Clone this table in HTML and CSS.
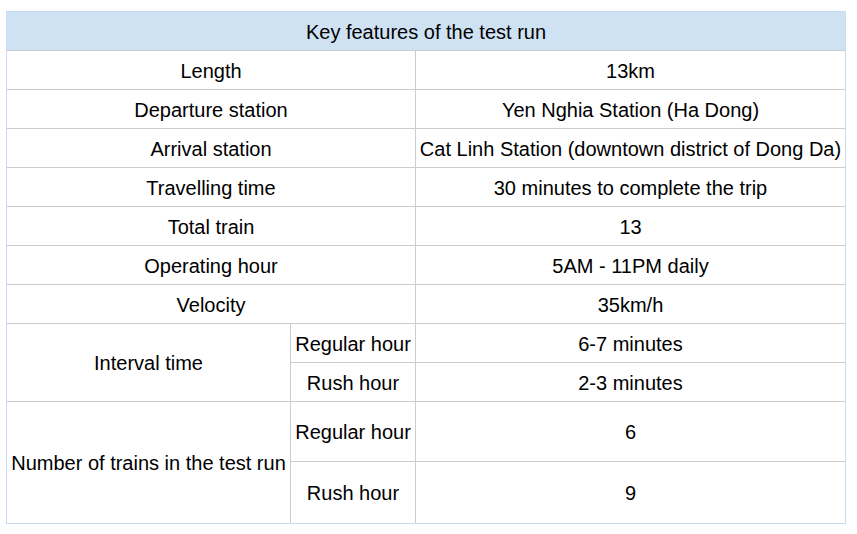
FILE: index.html
```html
<!DOCTYPE html>
<html>
<head>
<meta charset="utf-8">
<link rel="stylesheet" href="styles.css">
</head>
<body>
<table class="features">
  <colgroup>
    <col class="c1"><col class="c2"><col class="c3">
  </colgroup>
  <tr class="head"><td colspan="3">Key features of the test run</td></tr>
  <tr class="row"><td colspan="2">Length</td><td class="last">13km</td></tr>
  <tr class="row"><td colspan="2">Departure station</td><td class="last">Yen Nghia Station (Ha Dong)</td></tr>
  <tr class="row"><td colspan="2">Arrival station</td><td class="last">Cat Linh Station (downtown district of Dong Da)</td></tr>
  <tr class="row"><td colspan="2">Travelling time</td><td class="last">30 minutes to complete the trip</td></tr>
  <tr class="row"><td colspan="2">Total train</td><td class="last">13</td></tr>
  <tr class="row"><td colspan="2">Operating hour</td><td class="last">5AM - 11PM daily</td></tr>
  <tr class="row"><td colspan="2">Velocity</td><td class="last">35km/h</td></tr>
  <tr class="row"><td rowspan="2">Interval time</td><td>Regular hour</td><td class="last">6-7 minutes</td></tr>
  <tr class="row"><td>Rush hour</td><td class="last">2-3 minutes</td></tr>
  <tr class="tall"><td rowspan="2" class="bottom">Number of trains in the test run</td><td>Regular hour</td><td class="last">6</td></tr>
  <tr class="tall2"><td class="bottom">Rush hour</td><td class="last bottom">9</td></tr>
</table>
</body>
</html>
```
FILE: styles.css
```css
html, body {
  margin: 0;
  padding: 0;
  background: #ffffff;
}
body {
  padding: 11px 6px 0 6px;
}
.features {
  border-collapse: separate;
  border-spacing: 0;
  border: 1px solid #c9dcef;
  width: 839px;
  table-layout: fixed;
  font-family: "Liberation Sans", Arial, sans-serif;
  font-size: 20px;
  line-height: 23px;
  color: #000;
}
.c1 { width: 284px; }
.c2 { width: 125px; }
.c3 { width: 429px; }
.features td {
  text-align: center;
  vertical-align: middle;
  padding: 2px 0 0 0;
  border-right: 1px solid #cccccc;
  border-bottom: 1px solid #cccccc;
  white-space: nowrap;
}
.features td.last { border-right: none; }
.features td.bottom { border-bottom: none; }
.head td {
  background: #cfe2f3;
  height: 36px;
  border-right: none;
}
.row td { height: 36px; }
.tall td { height: 57px; }
.tall2 td { height: 59px; }
```
